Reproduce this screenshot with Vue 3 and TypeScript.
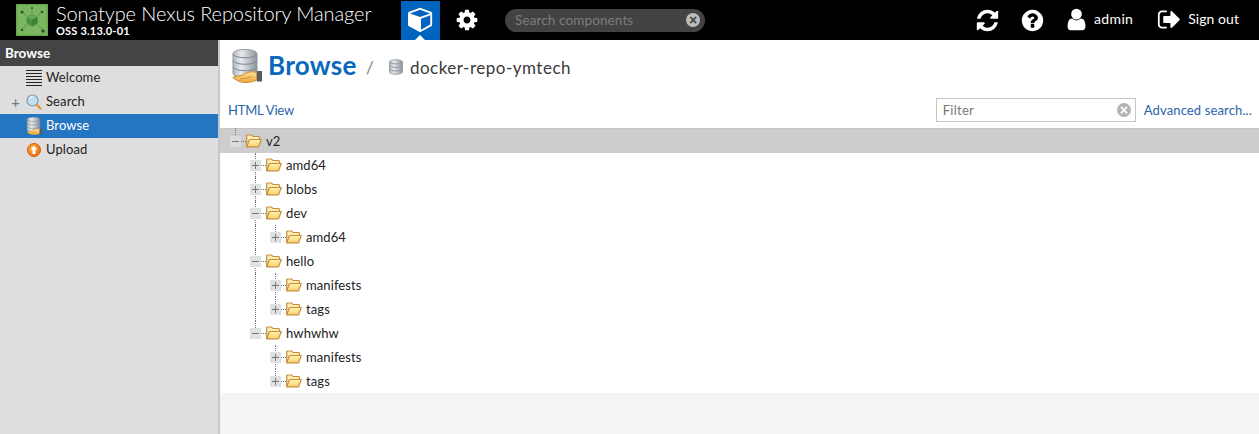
<script setup lang="ts">
interface TreeNode {
  label: string;
  open?: boolean;
  children?: TreeNode[];
}
interface Row {
  label: string;
  depth: number;
  open: boolean;
  stems: number[];
  last: boolean;
}

const tree: TreeNode = {
  label: 'v2',
  open: true,
  children: [
    { label: 'amd64' },
    { label: 'blobs' },
    { label: 'dev', open: true, children: [{ label: 'amd64' }] },
    { label: 'hello', open: true, children: [{ label: 'manifests' }, { label: 'tags' }] },
    { label: 'hwhwhw', open: true, children: [{ label: 'manifests' }, { label: 'tags' }] },
  ],
};

function flatten(node: TreeNode, depth: number, stems: number[], last: boolean): Row[] {
  const rows: Row[] = [{ label: node.label, depth, open: !!node.open, stems, last }];
  const kids = node.children ?? [];
  const next = !last && depth > 0 ? [...stems, depth] : stems;
  kids.forEach((k, i) => rows.push(...flatten(k, depth + 1, next, i === kids.length - 1)));
  return rows;
}
const rows = flatten(tree, 0, [], true);

const menu = [
  { label: 'Welcome', icon: 'welcome', plus: false, active: false },
  { label: 'Search', icon: 'search', plus: true, active: false },
  { label: 'Browse', icon: 'browse', plus: false, active: true },
  { label: 'Upload', icon: 'upload', plus: false, active: false },
];
const px = (n: number) => `${n}px`;
</script>

<template>
  <div class="app">
    <svg class="defs" width="0" height="0" aria-hidden="true">
      <defs>
        <linearGradient id="fold" x1="0" y1="0" x2="0" y2="1">
          <stop offset="0" stop-color="#fff3b8" />
          <stop offset="1" stop-color="#fdd266" />
        </linearGradient>
        <linearGradient id="dbg" x1="0" y1="0" x2="1" y2="0">
          <stop offset="0" stop-color="#b4bac1" />
          <stop offset=".35" stop-color="#e6e9ec" />
          <stop offset="1" stop-color="#8e959c" />
        </linearGradient>
        <linearGradient id="hand" x1="0" y1="0" x2="0" y2="1">
          <stop offset="0" stop-color="#fde09a" />
          <stop offset="1" stop-color="#eea93a" />
        </linearGradient>
        <radialGradient id="orb" cx=".4" cy=".35" r=".7">
          <stop offset="0" stop-color="#ffb347" />
          <stop offset="1" stop-color="#e8690c" />
        </radialGradient>
        <symbol id="folder" viewBox="0 0 16 14">
          <path d="M.7 12.800V2q0-1 1-1h3.800l1.500 1.500h5.500q1 0 1 1V5.500" fill="#fdeeb6" stroke="#c68e3c" stroke-width="1.200" />
          <path d="M.7 12.800l2.800-7.300h11.800l-2.800 7.300z" fill="url(#fold)" stroke="#c68e3c" stroke-width="1.200" stroke-linejoin="round" />
        </symbol>
        <symbol id="db" viewBox="0 0 14 16">
          <path d="M.5 3c0-3 13-3 13 0v10c0 3-13 3-13 0z" fill="url(#dbg)" stroke="#9aa1a8" />
          <path d="M.5 6.500c1 2.500 12 2.500 13 0M.5 10c1 2.500 12 2.500 13 0M.5 3c1 2.500 12 2.500 13 0" fill="none" stroke="#8f969d" />
        </symbol>
        <symbol id="browse" viewBox="0 0 30 34">
          <path d="M1 5c0-6 24-6 24 0v19c0 6-24 6-24 0z" fill="url(#dbg)" stroke="#8f969d" />
          <path d="M1 5c2 5 22 5 24 0M1 11.500c2 5 22 5 24 0M1 18c2 5 22 5 24 0" fill="none" stroke="#7f868d" />
          <path d="M.8 28.500c3-1.500 6-1.800 9-2 2-1.500 5-3.300 8-3.600 2.500-.2 5 0 7 .3v8c-4 1.500-7 2.300-12 2.300-5 0-9-2.500-12-5z" fill="url(#hand)" stroke="#c98a2b" />
          <path d="M8 29.500c4 .3 8-.5 12-2" fill="none" stroke="#c98a2b" stroke-width=".8" />
          <rect x="25" y="22" width="5" height="10.500" fill="#555b60" />
        </symbol>
      </defs>
    </svg>

    <header class="top">
      <div class="brand">
        <svg class="logo" viewBox="0 0 32 32">
          <rect width="32" height="32" fill="#6aa84f" />
          <rect x="1.500" y="1.500" width="29" height="29" fill="#79b85e" />
          <path d="M16 16L6 8M16 16l10-8M16 16L6 25M16 16l10 9M16 16V4" stroke="#5b9149" stroke-width=".8" />
          <circle cx="6" cy="8" r="1.600" fill="#3f4f3d" />
          <circle cx="26" cy="8" r="1.300" fill="#3f4f3d" />
          <circle cx="6" cy="26" r="1.300" fill="#3f4f3d" />
          <circle cx="27" cy="27" r="1.800" fill="#3f4f3d" />
          <circle cx="16" cy="4" r="1" fill="#3f4f3d" />
          <path d="M16 10l5.500 3v6L16 22.500 10.500 19v-6z" fill="#4a8f40" />
          <path d="M16 10l5.500 3-5.500 3-5.500-3z" fill="#5fa850" />
          <path d="M16 16l5.500-3v6L16 22.500z" fill="#3e8038" />
        </svg>
        <div class="brand-text">
          <div class="title">Sonatype Nexus Repository Manager</div>
          <div class="version">OSS 3.13.0-01</div>
        </div>
      </div>
      <div class="tab tab-on">
        <svg class="fa cube" viewBox="0 0 1792 1792"><path fill="#fff" d="M896 1629l640-349v-636l-640 233v752zm-64-865l698-254-698-254-698 254zm832-252v768q0 35-18 65t-49 47l-704 384q-28 16-61 16t-61-16l-704-384q-31-17-49-47t-18-65v-768q0-40 23-73t61-47l704-256q22-8 44-8t44 8l704 256q38 14 61 47t23 73z" /></svg>
      </div>
      <div class="tab">
        <svg class="fa gear" viewBox="0 0 1792 1792"><path fill="#fff" d="M1152 896q0-106-75-181t-181-75-181 75-75 181 75 181 181 75 181-75 75-181zm512-109v222q0 12-8 23t-20 13l-185 28q-19 54-39 91 35 50 107 138 10 12 10 25t-9 23q-27 37-99 108t-94 71q-12 0-26-9l-138-108q-44 23-91 38-16 136-29 186-7 28-36 28h-222q-14 0-24.500-8.500t-11.500-21.500l-28-184q-49-16-90-37l-141 107q-10 9-25 9-14 0-25-11-126-114-165-168-7-10-7-23 0-12 8-23 15-21 51-66.500t54-70.500q-27-50-41-99l-183-27q-13-2-21-12.500t-8-23.500v-222q0-12 8-23t19-13l186-28q14-46 39-92-40-57-107-138-10-12-10-24 0-10 9-23 26-36 98.500-107.500t94.500-71.500q13 0 26 10l138 107q44-23 91-38 16-136 29-186 7-28 36-28h222q14 0 24.500 8.500t11.500 21.500l28 184q49 16 90 37l142-107q9-9 24-9 13 0 25 10 129 119 165 170 7 8 7 22 0 12-8 23-15 21-51 66.500t-54 70.500q26 50 41 98l183 28q13 2 21 12.500t8 23.500z" /></svg>
      </div>
      <div class="pill">
        <span class="pill-text">Search components</span>
        <span class="clear clear-dark">×</span>
      </div>
      <div class="spacer"></div>
      <svg class="fa refresh" viewBox="0 0 1792 1792"><path fill="#fff" d="M1639 1056q0 5-1 7-64 268-268 434.500t-478 166.500q-146 0-282.500-55t-243.500-157l-129 129q-19 19-45 19t-45-19-19-45v-448q0-26 19-45t45-19h448q26 0 45 19t19 45-19 45l-137 137q71 66 161 102t187 36q134 0 250-65t186-179q11-17 53-117 8-23 30-23h192q13 0 22.500 9.500t9.500 22.500zm25-800v448q0 26-19 45t-45 19h-448q-26 0-45-19t-19-45 19-45l138-138q-148-137-349-137-134 0-250 65t-186 179q-11 17-53 117-8 23-30 23h-199q-13 0-22.500-9.500t-9.500-22.500v-7q65-268 270-434.500t480-166.500q146 0 284 55.500t245 156.500l130-129q19-19 45-19t45 19 19 45z" /></svg>
      <svg class="fa help" viewBox="0 0 1792 1792"><path fill="#fff" d="M1024 1376v-192q0-14-9-23t-23-9h-192q-14 0-23 9t-9 23v192q0 14 9 23t23 9h192q14 0 23-9t9-23zm256-672q0-88-55.500-163t-138.500-116-170-41q-243 0-371 213-15 24 8 42l132 100q7 6 19 6 16 0 25-12 53-68 86-92 34-24 86-24 48 0 85.500 26t37.500 59q0 38-20 61t-68 45q-63 28-115.500 86.500t-52.500 125.500v36q0 14 9 23t23 9h192q14 0 23-9t9-23q0-19 21.500-49.500t54.500-49.500q32-18 49-28.500t46-35 44.500-48 28-60.500 12.500-81zm384 192q0 209-103 385.500t-279.500 279.500-385.500 103-385.500-103-279.500-279.500-103-385.500 103-385.500 279.500-279.500 385.500-103 385.500 103 279.500 279.500 103 385.500z" /></svg>
      <svg class="fa user" viewBox="0 0 1792 1792"><path fill="#fff" d="M1536 1399q0 109-62.500 187t-150.500 78h-854q-88 0-150.500-78t-62.500-187q0-85 8.500-160.500t31.500-152 58.500-131 94-89 134.500-34.500q131 128 313 128t313-128q76 0 134.500 34.500t94 89 58.500 131 31.500 152 8.500 160.500zm-256-887q0 159-112.500 271.500t-271.500 112.500-271.500-112.500-112.500-271.500 112.500-271.500 271.500-112.500 271.500 112.500 112.500 271.500z" /></svg>
      <span class="top-link admin">admin</span>
      <svg class="fa signout" viewBox="0 0 1792 1792"><path fill="#fff" d="M704 1440q0 4 1 20t.5 26.500-3 23.500-10 19.500-20.500 6.500h-320q-119 0-203.500-84.500t-84.500-203.500v-704q0-119 84.500-203.500t203.500-84.500h320q13 0 22.500 9.500t9.500 22.500q0 4 1 20t.5 26.500-3 23.500-10 19.500-20.500 6.500h-320q-66 0-113 47t-47 113v704q0 66 47 113t113 47h312l11.500 1 11.500 3 8 5.500 7 9 2 13.500zm928-544q0 26-19 45l-544 544q-19 19-45 19t-45-19-19-45v-288h-448q-26 0-45-19t-19-45v-384q0-26 19-45t45-19h448v-288q0-26 19-45t45-19 45 19l544 544q19 19 19 45z" /></svg>
      <span class="top-link signout-label">Sign out</span>
    </header>

    <div class="body">
      <aside class="side">
        <div class="side-head">Browse</div>
        <div v-for="m in menu" :key="m.label" class="side-row" :class="{ on: m.active }">
          <span class="side-plus">{{ m.plus ? '+' : '' }}</span>
          <span class="side-icon">
            <svg v-if="m.icon === 'welcome'" viewBox="0 0 16 16" width="16" height="16">
              <path d="M0 .5h16M0 3.500h16M0 6.500h16M0 9.500h16M0 12.500h16M0 15.500h16" stroke="#222" />
            </svg>
            <svg v-else-if="m.icon === 'search'" viewBox="0 0 16 16" width="16" height="16">
              <circle cx="6.500" cy="6.500" r="5.500" fill="#bfe0f5" stroke="#7f98ab" stroke-width="1.200" />
              <path d="M3.500 5a3.500 3.500 0 0 1 3-2.500" stroke="#fff" fill="none" />
              <path d="M10.800 10.800l3.700 3.700" stroke="#d99a3c" stroke-width="2.400" stroke-linecap="round" />
            </svg>
            <svg v-else-if="m.icon === 'browse'" class="mini-browse" viewBox="0 0 30 34"><use href="#browse" /></svg>
            <svg v-else viewBox="0 0 14 14" width="14" height="14">
              <circle cx="7" cy="7" r="6.500" fill="url(#orb)" stroke="#d85f0a" />
              <path d="M7 2.800l3.400 3.700H8.500v4.500h-3V6.500H3.600z" fill="#fff" />
            </svg>
          </span>
          <span class="side-label">{{ m.label }}</span>
        </div>
      </aside>

      <main class="main">
        <div class="page-head">
          <svg class="head-icon" viewBox="0 0 30 34"><use href="#browse" /></svg>
          <span class="page-title">Browse</span>
          <span class="slash">/</span>
          <svg class="crumb-icon" viewBox="0 0 14 16"><use href="#db" /></svg>
          <span class="crumb">docker-repo-ymtech</span>
        </div>
        <div class="toolbar">
          <a class="link html">HTML View</a>
          <div class="filter">
            <span class="filter-text">Filter</span>
            <span class="clear clear-light">×</span>
          </div>
          <a class="link adv">Advanced search...</a>
        </div>
        <div class="tree">
          <div
            v-for="(r, i) in rows"
            :key="i"
            class="tree-row"
            :class="{ root: r.depth === 0 }"
            :style="{ paddingLeft: px(10 + r.depth * 20) }"
          >
            <span v-for="s in r.stems" :key="s" class="stem" :style="{ left: px(15 + s * 20) }"></span>
            <span
              class="elbow"
              :class="{ 'elbow-full': !r.last && r.depth > 0 }"
              :style="{ left: px(15 + r.depth * 20) }"
            ></span>
            <span class="box">
              <span class="box-h"></span>
              <span v-if="!r.open" class="box-v"></span>
            </span>
            <span class="dash"></span>
            <svg class="folder" viewBox="0 0 16 14"><use href="#folder" /></svg>
            <span class="tree-label">{{ r.label }}</span>
          </div>
        </div>
      </main>
    </div>
  </div>
</template>

<style>
html, body { margin: 0; padding: 0; overflow: hidden; }
</style>

<style scoped>
.app {
  height: 434px;
  display: flex;
  flex-direction: column;
  font-family: Lato, "Liberation Sans", sans-serif;
  font-size: 13px;
  color: #222;
  background: #f4f4f4;
}
.defs { position: absolute; }
.top {
  height: 40px;
  flex: none;
  background: #000;
  color: #fff;
  display: flex;
  align-items: center;
  padding-left: 16px;
  box-sizing: border-box;
}
.brand { display: flex; align-items: center; width: 385px; flex: none; }
.logo { width: 32px; height: 32px; flex: none; }
.brand-text { margin-left: 8px; }
.title { font-size: 20px; font-weight: 300; line-height: 22px; letter-spacing: -0.09px; white-space: nowrap; margin-top: -2px; }
.version { font-size: 11px; font-weight: 700; line-height: 11px; letter-spacing: 0.2px; margin-top: 1px; }
.tab { width: 39px; height: 39px; margin-top: 1px; display: flex; align-items: center; justify-content: center; position: relative; flex: none; }
.tab-on { background: #0064be; }
.tab-on::after {
  content: "";
  position: absolute;
  left: 14px;
  bottom: 0;
  border: 5px solid transparent;
  border-top: 0;
  border-bottom-color: #fff;
}
.tab + .tab { margin-left: 8px; }
.fa { flex: none; display: block; }
.cube { width: 26px; height: 26px; margin-top: -4px; }
.gear { width: 24px; height: 24px; margin-top: -2px; margin-left: -2px; }
.pill {
  width: 200px;
  height: 23px;
  margin-left: 18px;
  background: #434343;
  border-radius: 12px;
  display: flex;
  align-items: center;
  justify-content: space-between;
  padding: 0 5px 0 10px;
  box-sizing: border-box;
  flex: none;
}
.pill-text { color: #7c7c7c; font-size: 13.500px; letter-spacing: 0.12px; }
.clear {
  width: 14px;
  height: 14px;
  border-radius: 50%;
  display: flex;
  align-items: center;
  justify-content: center;
  font: 700 14px/14px "Liberation Sans", sans-serif;
  flex: none;
}
.clear-dark { background: #bdbdbd; color: #434343; }
.clear-light { background: #b4b4b4; color: #fff; }
.spacer { flex: 1; }
.refresh { width: 25px; height: 25px; margin-right: 20px; }
.help { width: 25px; height: 25px; margin-right: 19px; }
.user { width: 25px; height: 25px; margin-top: -1px; }
.top-link { font-size: 14px; letter-spacing: 0.35px; margin-top: -3px; }
.admin { margin-left: 5px; margin-right: 24px; }
.signout { width: 25px; height: 25px; margin-top: -2px; }
.signout-label { margin-left: 6px; margin-right: 20px; letter-spacing: 0.05px; }

.body { flex: 1; display: flex; min-height: 0; }
.side {
  width: 220px;
  flex: none;
  box-sizing: border-box;
  background: #dedede;
  border-right: 2px solid #c8c8c8;
}
.side-head {
  height: 26px;
  background: #444;
  color: #fff;
  font-weight: 700;
  font-size: 13.500px;
  line-height: 26px;
  padding-left: 5px;
}
.side-row { height: 24px; display: flex; align-items: center; }
.side-row.on { background: #2475c2; color: #fff; }
.side-plus { width: 26px; flex: none; text-align: right; padding-right: 6px; box-sizing: border-box; color: #777; font-size: 15px; }
.side-icon { width: 16px; height: 16px; flex: none; display: flex; align-items: center; justify-content: center; }
.mini-browse { width: 17px; height: 18px; flex: none; }
.side-label { margin-left: 4px; margin-top: -2px; letter-spacing: 0.1px; }

.main { flex: 1; min-width: 0; display: flex; flex-direction: column; }
.page-head { height: 50px; background: #fff; display: flex; align-items: center; padding-left: 12px; flex: none; box-sizing: border-box; }
.head-icon { width: 30px; height: 34px; flex: none; margin-top: 1px; }
.page-title { font-size: 26px; font-weight: 700; color: #0a68bc; margin-left: 6px; letter-spacing: 0.3px; }
.slash { margin-left: 9px; color: #888; font-size: 18px; margin-top: 3px; }
.crumb-icon { width: 14px; height: 16px; margin-left: 15px; flex: none; margin-top: 4px; }
.crumb { font-size: 17px; margin-left: 7px; color: #3a3a3a; letter-spacing: 0.5px; margin-top: 4px; }
.toolbar {
  height: 39px;
  background: #fff;
  border-bottom: 1px solid #c4c4c4;
  display: flex;
  align-items: center;
  padding: 2px 7px 0 8px;
  box-sizing: border-box;
  flex: none;
}
.link { color: #2a63ab; letter-spacing: 0.13px; }
.html { letter-spacing: -0.2px; }
.filter {
  margin-left: auto;
  width: 200px;
  height: 24px;
  box-sizing: border-box;
  border: 1px solid #c6c6c6;
  display: flex;
  align-items: center;
  justify-content: space-between;
  padding: 0 4px 0 6px;
}
.filter-text { color: #777; letter-spacing: 0.25px; }
.adv { margin-left: 8px; }
.tree { background: #fff; flex: none; }
.tree-row {
  height: 24px;
  display: flex;
  align-items: center;
  position: relative;
  box-sizing: border-box;
}
.tree-row.root { background: #cdcdcd; }
.stem, .elbow {
  position: absolute;
  top: 0;
  border-left: 1px dotted #777;
}
.stem { bottom: 0; }
.elbow { height: 7px; }
.elbow-full { height: 24px; }
.root .elbow { top: -1px; }
.box {
  width: 11px;
  height: 11px;
  background: #dfe1e4;
  position: relative;
  flex: none;
  z-index: 1;
}
.root .box { background: #dcdcdc; }
.box-h { position: absolute; left: 2px; right: 2px; top: 5px; height: 1px; background: #777; }
.box-v { position: absolute; top: 2px; bottom: 2px; left: 5px; width: 1px; background: #777; }
.dash { width: 5px; border-top: 1px dotted #777; flex: none; }
.folder { width: 16px; height: 14px; flex: none; }
.tree-label { margin-left: 4px; letter-spacing: 0.1px; }
</style>
